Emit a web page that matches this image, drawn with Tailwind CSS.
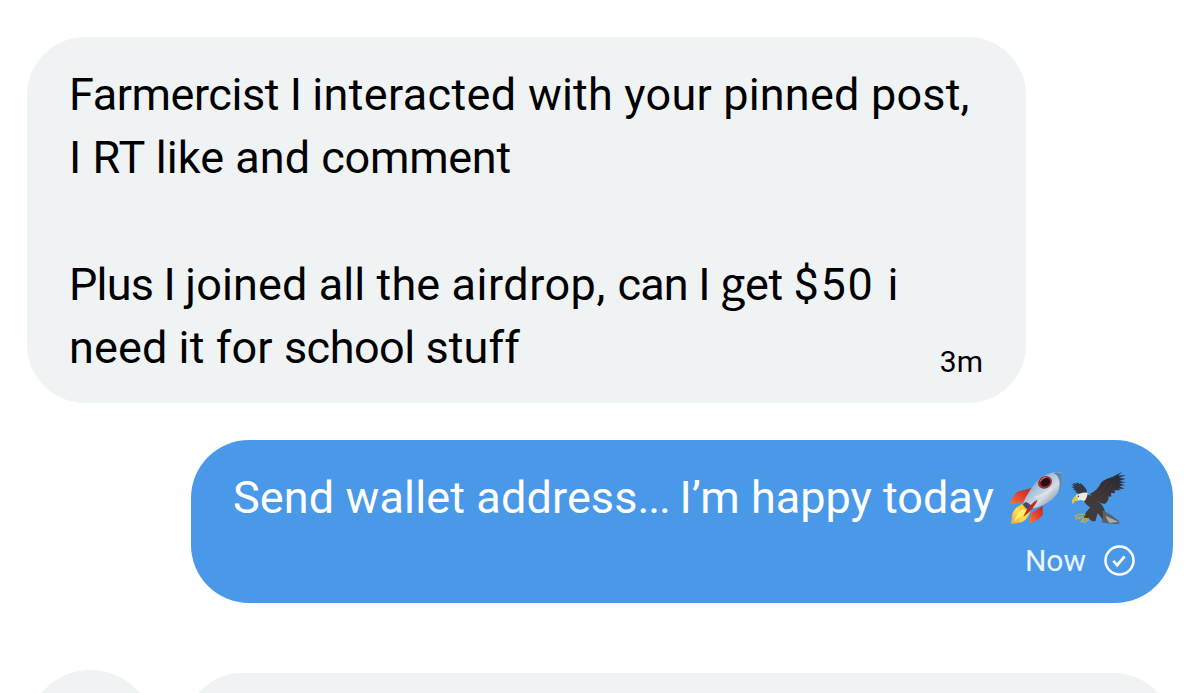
<!DOCTYPE html>
<html lang="en">
<head>
<meta charset="utf-8">
<title>Messages</title>
<script src="https://cdn.jsdelivr.net/npm/@tailwindcss/browser@4"></script>
</head>
<body class="bg-white font-['Roboto',sans-serif]">
<main class="flex h-[693px] w-[1200px] flex-col overflow-hidden pt-[37px] pr-[27px] pl-[27px]">

  <!-- Received message -->
  <section class="flex h-[366px] w-[999px] shrink-0 items-end justify-between rounded-[58px] bg-[#eff3f4] pr-[43px] pl-[42px] text-black">
    <div class="h-full pt-[26px] text-[45px] leading-[63.2px] whitespace-nowrap">
      <p class="tracking-[0.2px]"><span class="tracking-[-0.45px]">Farmercist I </span><span class="tracking-[0.35px]">interacted </span>with your pinned post,</p>
      <p><span class="tracking-[0.05px]">I RT like and </span><span class="tracking-[-0.3px]">comment</span></p>
      <p>&nbsp;</p>
      <p class="tracking-[0.1px]"><span class="tracking-[-0.8px]">Plus I </span>joined all the <span class="tracking-[0.5px]">airdrop, </span><span class="tracking-[-0.8px]">can I </span><span class="tracking-[-0.4px]"><span class="font-['Noto_Sans_CJK_SC'] leading-none">g</span>et </span><span class="tracking-[1.7px]">$50 </span>i</p>
      <p class="tracking-[0.1px]">need it for <span class="tracking-[-0.5px]">school </span>stuff</p>
    </div>
    <time class="-ml-24 pb-[23px] text-[30px] leading-9">3m</time>
  </section>

  <!-- Sent message -->
  <section class="mt-[37px] flex h-[163px] w-[982px] shrink-0 flex-col self-end rounded-[58px] bg-[#4a99e9] pt-[26px] pr-[38px] pl-[42px] text-white">
    <div class="flex items-start whitespace-nowrap text-[45px] leading-[63.2px]">
      <p class="w-[775px]"><span class="tracking-[0.12px]">Send wallet address</span><span class="tracking-[-1.2px]">... </span>I’m happy today</p>
      <svg class="mt-[5px] h-[54px] w-[56px] shrink-0" viewBox="57 33 168 162" role="img" aria-label="Rocket">
        <defs>
          <linearGradient id="hull" x1="0" y1="0" x2="1" y2="1"><stop offset=".1" stop-color="#527eac"/><stop offset=".4" stop-color="#a9c4dc"/><stop offset=".6" stop-color="#d3dce4"/><stop offset=".95" stop-color="#566f8b"/></linearGradient>
          <linearGradient id="fin" x1="1" y1="0" x2="0" y2="1"><stop stop-color="#b42b25"/><stop offset=".5" stop-color="#e5432d"/><stop offset="1" stop-color="#f27b3c"/></linearGradient>
          <linearGradient id="flame" x1="1" y1="0" x2="0" y2="1"><stop stop-color="#f3a329"/><stop offset=".5" stop-color="#ffe352"/><stop offset="1" stop-color="#f4a233"/></linearGradient>
        </defs>
        <path d="M128 84 85 95Q72 106 61 133L112 125Z" fill="url(#fin)"/>
        <path d="M161 137 130 157Q119 172 123 190Q146 184 161 165Z" fill="url(#fin)"/>
        <path d="M105 130Q78 139 70 162Q69 177 66 192Q84 190 100 186Q119 175 125 150Z" fill="url(#flame)"/>
        <path d="M101 147Q83 163 75 183Q98 173 112 153Z" fill="#fff26c"/>
        <path d="M102 130Q118 92 145 62Q173 35 212 36Q222 37 222 52Q221 91 188 119Q164 138 132 145Z" fill="url(#hull)"/>
        <path d="M192 39Q216 33 221 43Q225 71 207 99Q216 72 209 56Q205 44 192 39Z" fill="#3f6f9f" opacity=".75"/>
        <path d="M110 126Q122 128 132 145L120 153Q107 143 101 133Z" fill="#444c63"/>
        <path d="M146 120Q136 145 103 171Q113 143 138 123Z" fill="#bc2925"/>
        <ellipse cx="168" cy="67" rx="22" ry="18" transform="rotate(-28 168 67)" fill="#a52c36"/>
        <ellipse cx="169" cy="67" rx="15" ry="12" transform="rotate(-28 169 67)" fill="#260d18"/>
        <path d="M154 65Q159 53 171 52" fill="none" stroke="#e27a7f" stroke-width="3"/>
        <path d="M137 112Q160 109 186 86" fill="none" stroke="#f1f4f5" stroke-width="6" opacity=".5"/>
      </svg>
      <svg class="mt-[5px] ml-[6px] h-[54px] w-[57px] shrink-0" viewBox="243 33 171 162" role="img" aria-label="Eagle">
        <defs><linearGradient id="wing" x1="1" y1="0" x2="0" y2="1"><stop stop-color="#252a34"/><stop offset=".6" stop-color="#383134"/><stop offset="1" stop-color="#4b3d3b"/></linearGradient></defs>
        <path d="M273 103 258 96 263 94 251 88 258 87 247 80 256 80 247 72 258 74 251 68 265 71 262 66 274 73 274 68 283 77Q295 87 295 103Z" fill="#343944"/>
        <path d="M303 101Q326 91 336 68Q349 56 370 51L400 35 387 47 410 45 390 54 410 56 391 63 411 67 392 70 408 76 390 78 407 86 386 86 398 91 376 91 379 99 366 99 367 110 359 109Q359 125 347 132Q332 129 323 122Q311 116 303 101Z" fill="url(#wing)"/>
        <path d="M325 101Q345 88 355 67M333 112Q355 99 370 73M343 121Q360 107 381 79" fill="none" stroke="#66534d" stroke-width="2" opacity=".5"/>
        <path d="M287 105Q310 100 325 123Q346 137 348 157L371 174 344 184Q333 166 326 159L319 184Q304 183 299 176L284 172Q293 150 304 143Q289 133 284 123Z" fill="#403a3b"/>
        <path d="M340 151Q365 162 390 183L391 191Q374 194 337 187Q345 178 340 151Z" fill="#5c6067"/>
        <path d="M350 167 389 186 362 189Q356 184 350 167Z" fill="#aaa9ac"/>
        <path d="M296 98Q283 97 269 102Q257 106 256 115L265 122Q277 117 285 124Q294 116 296 98Z" fill="#eee8e5"/>
        <path d="M260 108Q249 115 248 124Q249 130 252 132Q256 123 265 121L268 113Z" fill="#e9c83f"/>
        <circle cx="268" cy="109" r="2.2" fill="#222"/>
        <path d="M289 165Q272 159 259 168Q261 173 262 177L269 170 271 177 276 170 285 171M302 177 286 176Q277 178 277 187L285 182 287 189 293 182 299 181" fill="none" stroke="#c2a763" stroke-width="3.5" stroke-linejoin="round"/>
      </svg>
    </div>
    <div class="mt-[13px] flex items-center justify-end gap-[18px]">
      <time class="pt-[2px] text-[30px] leading-[34px] text-white/90">Now</time>
      <svg class="h-[31px] w-[31px]" viewBox="0 0 31 31" fill="none" stroke="white" role="img" aria-label="Sent">
        <circle cx="15.5" cy="15.5" r="14" stroke-width="2.5"/>
        <path d="M9.3 15.8 13.2 20.2 20.6 11.3" stroke-width="2.7"/>
      </svg>
    </div>
  </section>

  <!-- Next received message, cut off at the viewport edge -->
  <section class="mt-[67px] flex shrink-0 gap-[30px]">
    <div class="size-[127px] rounded-full bg-[#eff3f4]"></div>
    <div class="mt-[3px] h-[160px] w-[988px] shrink-0 rounded-[58px] bg-[#eff3f4]"></div>
  </section>
</main>
</body>
</html>
